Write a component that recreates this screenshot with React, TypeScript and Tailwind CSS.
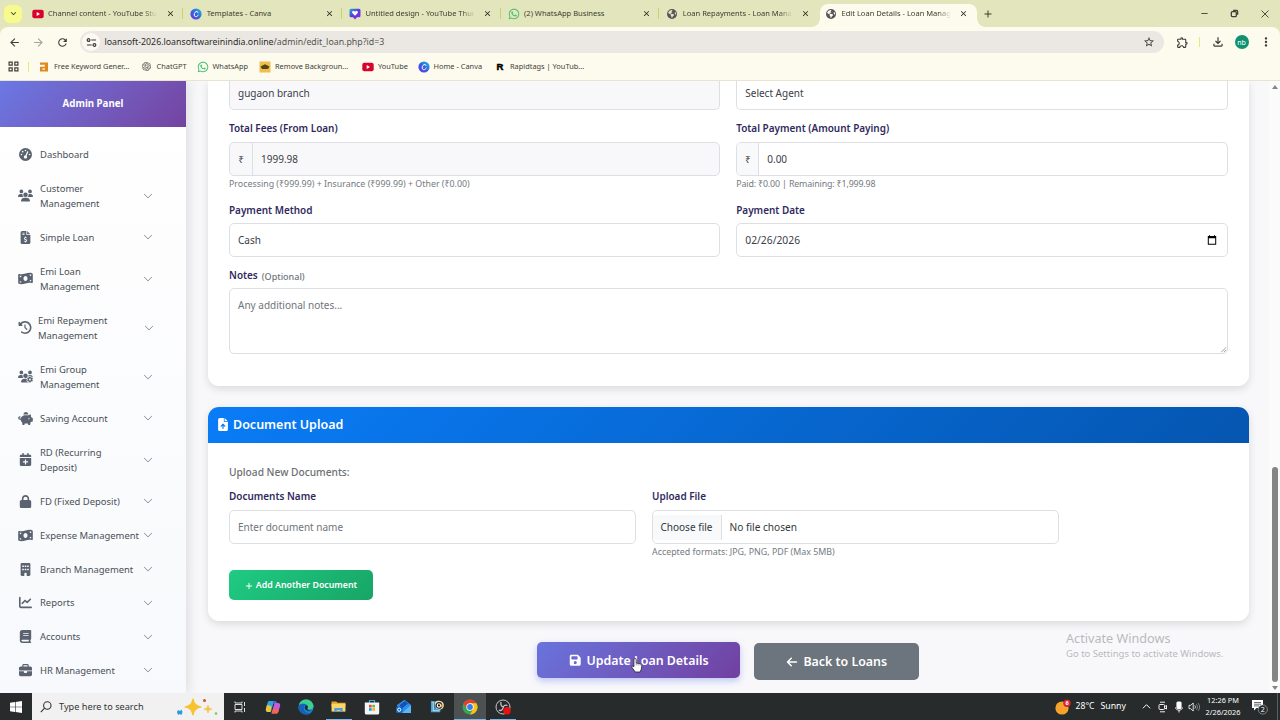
import type { ReactNode } from "react";
import type { IconType } from "react-icons";
import {
  FaArrowLeft, FaBook, FaBriefcase, FaBuilding, FaCalendarPlus, FaChartLine, FaClockRotateLeft,
  FaEarthAmericas, FaFileArrowUp, FaFileInvoiceDollar, FaFloppyDisk, FaGaugeHigh, FaLock,
  FaMoneyBillWave, FaPiggyBank, FaPlus, FaUsers, FaUsersGear,
} from "react-icons/fa6";
import { BsChevronDown } from "react-icons/bs";
import { FaWhatsapp } from "react-icons/fa";
import { SiOpenai } from "react-icons/si";
import {
  MdArrowBack, MdArrowForward, MdClose, MdMoreVert, MdOutlineExtension, MdOutlineFileDownload,
  MdRefresh, MdStarBorder, MdKeyboardArrowDown, MdAdd,
} from "react-icons/md";

/* ---------- small brand marks ---------- */

const YouTubeMark = () => (
  <svg viewBox="0 0 12 12" className="size-3">
    <rect x="0.3" y="1.8" width="11.4" height="8.4" rx="2" fill="#d9042b" />
    <path d="M4.7 4.1 8 6 4.7 7.9z" fill="#fff" />
  </svg>
);

const CanvaMark = () => (
  <svg viewBox="0 0 12 12" className="size-3">
    <defs>
      <linearGradient id="canva" x1="0" y1="1" x2="1" y2="0">
        <stop offset="0" stopColor="#6a2be8" />
        <stop offset="0.5" stopColor="#3566e0" />
        <stop offset="1" stopColor="#17c3cf" />
      </linearGradient>
    </defs>
    <circle cx="6" cy="6" r="5.6" fill="url(#canva)" />
    <path d="M8 4.4C7.8 3.2 6.2 3 5 4.4 3.7 6 4 8.6 5.700 8.700 6.8 8.7 7.7 8 8.2 7.1" fill="none" stroke="#fff" strokeWidth="1" strokeLinecap="round" />
  </svg>
);

const DesignMark = () => (
  <svg viewBox="0 0 12 12" className="size-3">
    <defs>
      <linearGradient id="design" x1="0" y1="0" x2="1" y2="1">
        <stop offset="0" stopColor="#12b5d8" />
        <stop offset="0.45" stopColor="#5a3be0" />
        <stop offset="1" stopColor="#8a2be2" />
      </linearGradient>
    </defs>
    <path d="M2 .7h8A1.5 1.5 0 0 1 11.5 2.2v5.6A1.5 1.5 0 0 1 10 9.3H8L6 11.5 4 9.3H2A1.5 1.5 0 0 1 .5 7.8V2.2A1.5 1.5 0 0 1 2 .7z" fill="url(#design)" />
    <path d="M6 7.800 3.500 5.300a1.400 1.400 0 0 1 2-2l.5.5.5-.5a1.400 1.400 0 0 1 2 2z" fill="#fff" />
  </svg>
);

const WhatsAppMark = () => <FaWhatsapp className="size-3 text-[#3cbf6b]" />;
const GlobeMark = () => <FaEarthAmericas className="size-[10px] text-[#55575a]" />;

const KeywordMark = () => (
  <svg viewBox="0 0 10 10" className="size-[10px]">
    <path d="M1 .5h8v9H1V4.800h4.800V2.800H1zM3.500 6.300v1.500h2.300V6.300z" fill="#e08a1e" fillRule="evenodd" />
  </svg>
);

const RemoveBgMark = () => (
  <svg viewBox="0 0 12 12" className="size-3">
    <rect x="0.5" y="0.5" width="11" height="11" fill="#f0be4a" />
    <path d="M1.500 5.500 6 3.200l4.500 2.300L9 8H3z" fill="#54441c" />
  </svg>
);

const RapidMark = () => (
  <span className="font-['Liberation_Sans',sans-serif] text-[9.5px] leading-none font-bold text-black [-webkit-text-stroke:0.5px_#000]">R</span>
);

/* ---------- browser chrome ---------- */

const tabs: { title: string; mark: () => ReactNode; fade?: boolean; active?: boolean }[] = [
  { title: "Channel content - YouTube Stu", mark: YouTubeMark, fade: true },
  { title: "Templates - Canva", mark: CanvaMark },
  { title: "Untitled design - YouTube Thur", mark: DesignMark, fade: true },
  { title: "(2) WhatsApp Business", mark: WhatsAppMark },
  { title: "Loan Repayments - Loan Mana", mark: GlobeMark, fade: true },
  { title: "Edit Loan Details - Loan Manag", mark: GlobeMark, fade: true, active: true },
];

function TabStrip() {
  return (
    <div className="flex h-[27px] items-stretch bg-[#e3e5bd] text-[#3c3d2c]">
      <div className="flex w-[24.5px] shrink-0 items-center pl-1">
        <span className="flex size-[18px] items-center justify-center rounded-md bg-[#f7fb8e]">
          <MdKeyboardArrowDown className="size-[11px]" />
        </span>
      </div>
      {tabs.map(({ title, mark: Mark, fade, active }, i) => (
        <div key={title} className={`flex w-[158.7px] shrink-0 pt-1 ${active ? "pl-[2px]" : ""}`}>
          <div
            className={
              active
                ? "relative flex w-full items-center rounded-t-lg bg-[#fdfaee] pb-1 pl-[5px] before:absolute before:bottom-0 before:-left-2 before:size-2 before:bg-[radial-gradient(circle_at_0_0,transparent_7.5px,#fdfaee_8px)] after:absolute after:-right-2 after:bottom-0 after:size-2 after:bg-[radial-gradient(circle_at_100%_0,transparent_7.5px,#fdfaee_8px)]"
                : "flex w-full items-center pb-1 pl-[7px]"
            }
          >
            <span className="flex w-3 shrink-0 justify-center"><Mark /></span>
            <span className="ml-[4.5px] flex w-[113px] shrink-0">
              <span className={`text-[7.55px] whitespace-nowrap ${fade ? "[mask-image:linear-gradient(to_right,#000_88%,transparent)]" : ""}`}>
                {title}
              </span>
            </span>
            <MdClose className="ml-[5px] size-[9px] shrink-0 text-[#26271c]" />
            {!active && i < 4 && <span className="ml-auto h-[11px] w-px bg-[#c9d36b]" />}
          </div>
        </div>
      ))}
      <MdAdd className="ml-[5px] size-3 shrink-0 self-center" />
      <div className="ml-auto flex items-center gap-[21px] pr-[10px] text-[#3c3d3a]">
        <svg viewBox="0 0 10 10" className="size-[9px]" fill="none" stroke="currentColor"><path d="M1.5 5h7" /></svg>
        <svg viewBox="0 0 10 10" className="size-[9px]" fill="none" stroke="currentColor" strokeWidth="1.4">
          <rect x="1.5" y="3" width="5.5" height="5.5" rx="1" />
          <path d="M3.5 1.5h4a1 1 0 0 1 1 1v4" />
        </svg>
        <svg viewBox="0 0 10 10" className="size-[10px]" fill="none" stroke="currentColor" strokeWidth="0.9"><path d="m1.5 1.500 7 7M8.500 1.500l-7 7" /></svg>
      </div>
    </div>
  );
}

function Toolbar() {
  return (
    <div className="flex h-[30px] items-center rounded-t-lg bg-[#fdfaee] text-[#3b3b38]">
      <MdArrowBack className="ml-2 size-[13px]" />
      <MdArrowForward className="ml-[11px] size-[13px] text-[#a3a29b]" />
      <MdRefresh className="ml-[11px] size-[13px]" />
      <div className="ml-[11px] flex h-[22px] w-[1083.5px] items-center rounded-full bg-[#ebe8e3] pr-[9px] pl-[2px]">
        <span className="flex size-[18px] items-center justify-center rounded-full bg-[#fbf9f2]">
          <svg viewBox="0 0 12 12" className="size-[11px]" fill="none" stroke="currentColor" strokeWidth="1.3">
            <circle cx="2.8" cy="3.3" r="1.5" />
            <path d="M5.800 3.300h5.200M1 8.700h5.200" />
            <circle cx="9.2" cy="8.7" r="1.5" />
          </svg>
        </span>
        <span className="ml-[4.5px] text-[8.8px] leading-none whitespace-nowrap text-[#2c2c2a]">
          loansoft-2026.loansoftwareinindia.online<span className="text-[#55554f]">/admin/edit_loan.php?id=3</span>
        </span>
        <MdStarBorder className="ml-auto size-3" />
      </div>
      <MdOutlineExtension className="ml-[12px] size-[13px]" />
      <span className="ml-[10px] h-[10px] w-px bg-[#e3ea7a]" />
      <MdOutlineFileDownload className="ml-[11px] size-[14px]" />
      <span className="ml-[10px] flex size-[14px] items-center justify-center rounded-full bg-[#0f9172] text-[7px] leading-none text-white">nb</span>
      <MdMoreVert className="ml-[10px] size-[14px]" />
    </div>
  );
}

const bookmarks: { label: string; mark: () => ReactNode; width: string }[] = [
  { label: "Free Keyword Gener...", mark: KeywordMark, width: "w-[102.5px]" },
  { label: "ChatGPT", mark: () => <SiOpenai className="size-[9px] text-[#4b4b48]" />, width: "w-[56px]" },
  { label: "WhatsApp", mark: WhatsAppMark, width: "w-[62.5px]" },
  { label: "Remove Backgroun...", mark: RemoveBgMark, width: "w-[103px]" },
  { label: "YouTube", mark: YouTubeMark, width: "w-[55.5px]" },
  { label: "Home - Canva", mark: CanvaMark, width: "w-[76.5px]" },
  { label: "Rapidtags | YouTub...", mark: RapidMark, width: "w-[100px]" },
];

function BookmarksBar() {
  return (
    <div className="flex h-[24px] items-center border-b border-[#e9e3cf] bg-[#fdfaee] pb-1 text-[#3f3f3a]">
      <svg viewBox="0 0 10 10" className="ml-2 size-[11px]" fill="none" stroke="currentColor" strokeWidth="1.1">
        <path d="M1 1h2.800v2.800H1zM6.200 1H9v2.800H6.200zM1 6.200h2.800V9H1zM6.200 6.200H9V9H6.200z" />
      </svg>
      <span className="mr-[9px] ml-[9px] h-[10px] w-px bg-[#e3ea7a]" />
      {bookmarks.map(({ label, mark: Mark, width }) => (
        <div key={label} className={`flex shrink-0 items-center gap-[4px] ${width}`}>
          <span className="flex w-3 justify-center"><Mark /></span>
          <span className="text-[7.4px] leading-none whitespace-nowrap">{label}</span>
        </div>
      ))}
    </div>
  );
}

/* ---------- admin sidebar ---------- */

const navItems: { lines: string[]; icon: IconType; narrow?: boolean }[] = [
  { lines: ["Customer", "Management"], icon: FaUsers },
  { lines: ["Simple Loan"], icon: FaFileInvoiceDollar },
  { lines: ["Emi Loan", "Management"], icon: FaMoneyBillWave },
  { lines: ["Emi Repayment", "Management"], icon: FaClockRotateLeft, narrow: true },
  { lines: ["Emi Group", "Management"], icon: FaUsersGear },
  { lines: ["Saving Account"], icon: FaPiggyBank },
  { lines: ["RD (Recurring", "Deposit)"], icon: FaCalendarPlus },
  { lines: ["FD (Fixed Deposit)"], icon: FaLock },
  { lines: ["Expense Management"], icon: FaMoneyBillWave },
  { lines: ["Branch Management"], icon: FaBuilding },
  { lines: ["Reports"], icon: FaChartLine },
  { lines: ["Accounts"], icon: FaBook },
  { lines: ["HR Management"], icon: FaBriefcase },
];

function Sidebar() {
  return (
    <aside className="z-10 flex w-[186px] shrink-0 flex-col overflow-hidden bg-linear-to-b from-white to-[#f8f9fc] shadow-[2px_0_12px_rgba(0,0,0,0.12)]">
      <div className="flex h-[46px] shrink-0 items-center justify-center bg-linear-135 from-[#6a78e4] to-[#7443a0] pt-px text-[9.7px] font-bold text-white">
        Admin Panel
      </div>
      <nav className="mt-[10px] text-[9.45px] leading-[15px] text-[#495057]">
        <div className="flex h-[34px] items-center pl-[19px]">
          <FaGaugeHigh className="size-[13px] text-[#5b6370]" />
          <span className="ml-2">Dashboard</span>
        </div>
        {navItems.map(({ lines, icon: Icon, narrow }) => (
          <div key={lines.join(" ")} className={`flex shrink-0 items-center pl-[18px] ${lines.length > 1 ? "h-[49.2px]" : "h-[33.8px]"}`}>
            <Icon className={`h-[13px] shrink-0 text-[#5b6370] ${narrow ? "w-[14px]" : "w-[15px]"}`} />
            <span className={`shrink-0 whitespace-nowrap ${narrow ? "ml-[6px] w-[104px]" : "ml-[7px] w-[102px]"}`}>
              {lines.map((line) => <span key={line} className="block">{line}</span>)}
            </span>
            <BsChevronDown className={`size-[10px] shrink-0 text-[#5b6370] ${narrow ? "ml-[2px]" : "ml-[1px]"}`} />
          </div>
        ))}
      </nav>
    </aside>
  );
}

/* ---------- form pieces ---------- */

const Label = ({ children }: { children: ReactNode }) => (
  <div className="flex h-[13px] items-center gap-[4px] pt-px text-[9.95px] leading-none font-semibold text-[#2f2a5e]">{children}</div>
);

const Help = ({ children }: { children: ReactNode }) => (
  <div className="mt-[2px] flex h-[12px] items-center text-[8.85px] leading-none text-[#747a80]">{children}</div>
);

const boxBase = "flex h-[34px] items-center rounded-[5px] border border-[#dddfe3] text-[10px] leading-none";

function Section({ children, className }: { children: ReactNode; className: string }) {
  return <section className={`shrink-0 bg-white shadow-[0_3px_8px_rgba(0,0,0,0.12)] ${className}`}>{children}</section>;
}

function PaymentCard() {
  return (
    <Section className="h-[305px] rounded-b-[11px] px-[21px]">
      <div className="grid grid-cols-2 gap-x-4 text-[#3b4046]">
        <div className="flex h-[29px] items-center rounded-b-[5px] border border-t-0 border-[#dddfe3] bg-[#f8f8fb] px-2 pb-[4px] text-[10px] leading-none">gugaon branch</div>
        <div className="flex h-[29px] items-center rounded-b-[5px] border border-t-0 border-[#dddfe3] px-2 pb-[4px] text-[10px] leading-none">Select Agent</div>

        <div className="mt-[12px]">
          <Label>Total Fees (From Loan)</Label>
          <div className={`mt-[7px] overflow-hidden bg-[#f8f8fb] ${boxBase}`}>
            <span className="flex h-full w-[23px] items-center justify-center border-r border-[#dddfe3]">₹</span>
            <span className="pl-2">1999.98</span>
          </div>
          <Help>Processing (₹999.99) + Insurance (₹999.99) + Other (₹0.00)</Help>
        </div>
        <div className="mt-[12px]">
          <Label>Total Payment (Amount Paying)</Label>
          <div className={`mt-[7px] overflow-hidden ${boxBase}`}>
            <span className="flex h-full w-[22px] items-center justify-center border-r border-[#dddfe3] bg-[#f8f9fa]">₹</span>
            <span className="pl-2">0.00</span>
          </div>
          <Help><span className="tracking-[-0.15px]">Paid: ₹0.00 | Remaining: ₹1,999.98</span></Help>
        </div>

        <div className="mt-[14px]">
          <Label>Payment Method</Label>
          <div className={`mt-[6px] px-2 ${boxBase}`}>Cash</div>
        </div>
        <div className="mt-[14px]">
          <Label>Payment Date</Label>
          <div className={`mt-[6px] justify-between pr-[10px] pl-2 ${boxBase}`}>
            <span className="text-[10.3px]">02/26/2026</span>
            <svg viewBox="0 0 10 10" className="size-[10px]"><path d="M1 1h1V.2h1V1h4V.2h1V1h1.200v8.800H.8V1zM1.800 3.300v5.500h6.400V3.300z" fill="#000" fillRule="evenodd" /></svg>
          </div>
        </div>
      </div>

      <div className="mt-[12px]">
        <Label>
          Notes <span className="text-[9px] font-medium text-[#6c757d]">(Optional)</span>
        </Label>
        <div className="mt-[6px] flex h-[66px] justify-between rounded-[5px] border border-[#dddfe3] pt-[11px] pl-2 text-[10px] leading-none text-[#6f757b]">
          Any additional notes...
          <svg viewBox="0 0 8 8" className="size-[7px] self-end" stroke="#777" strokeWidth="0.8"><path d="M1.500 7 7 1.500M4.500 7 7 4.500" /></svg>
        </div>
      </div>
    </Section>
  );
}

function DocumentCard() {
  return (
    <Section className="mt-[21px] h-[214px] overflow-hidden rounded-[11px]">
      <div className="flex h-[36px] items-center bg-linear-135 from-[#0a7cf7] to-[#0556b0] pt-px pl-[9px] text-[12.5px] font-semibold text-white">
        <FaFileArrowUp className="mr-1 mb-0.5 h-[13px] w-[12px]" />
        Document Upload
      </div>
      <div className="px-[21px] pt-[22px]">
        <div className="flex h-[13px] items-center pt-px text-[10.2px] leading-none font-medium text-[#6c6f73]">Upload New Documents:</div>
        <div className="mt-[12px] flex gap-4">
          <div className="w-[407px]">
            <Label>Documents Name</Label>
            <div className={`mt-[7px] px-2 text-[#6f757b] ${boxBase}`}>Enter document name</div>
          </div>
          <div className="w-[407px]">
            <Label>Upload File</Label>
            <div className={`mt-[7px] text-[#33383d] ${boxBase}`}>
              <span className="flex h-[25px] w-[68.5px] items-center border-r border-[#dddfe3] bg-[#f8f9fa] pl-[7.5px]">Choose file</span>
              <span className="pl-2 text-[10.15px]">No file chosen</span>
            </div>
            <Help>Accepted formats: JPG, PNG, PDF (Max 5MB)</Help>
          </div>
        </div>
        <button className="mt-[12px] flex h-[30px] w-[144px] items-center justify-center gap-[3px] rounded-[5px] bg-linear-135 from-[#1fcb83] to-[#18a566] pt-px text-[8.8px] font-semibold text-white">
          <FaPlus className="size-2" />
          Add Another Document
        </button>
      </div>
    </Section>
  );
}

function MainPane() {
  return (
    <main className="relative flex min-w-0 flex-1 flex-col bg-[#f8f8fb] pr-[20.5px] pl-[22px]">
      <PaymentCard />
      <DocumentCard />
      <div className="mt-[21px] flex items-start justify-center gap-[14px] text-[12.4px] font-semibold text-white">
        <button className="flex h-[36px] w-[203px] items-center justify-center gap-[5px] rounded-[5px] bg-linear-135 from-[#6874dd] to-[#7040a0] pt-[2px] shadow-[0_3px_7px_rgba(102,126,234,0.4)]">
          <FaFloppyDisk className="mb-0.5 size-[12.5px]" />
          Update Loan Details
        </button>
        <button className="mt-px flex h-[37px] w-[165px] items-center justify-center gap-[5px] rounded-[5px] bg-[#6c757d] pt-[2px]">
          <FaArrowLeft className="mb-px size-[12px]" />
          Back to Loans
        </button>
      </div>

      <svg viewBox="0 0 12 16" className="absolute top-[576px] left-[445px] h-[16px] w-3">
        <path d="M4 1.500c.8 0 1.200.5 1.200 1.200V6l4.300.8c.9.200 1.500.8 1.400 1.800l-.6 3.600-1.200 2.800H4.300L1 10.500c-.5-.8 0-1.600 1.100-1.300l.8.600V2.700c0-.7.400-1.200 1.100-1.200z" fill="#fff" stroke="#222" strokeWidth="0.8" strokeLinejoin="round" />
        <path d="M5.200 6v2.500M7.200 6.500v2M9.200 7v1.800" stroke="#444" strokeWidth="0.5" />
      </svg>
      <div className="absolute top-[548px] left-[880px] leading-none whitespace-nowrap text-[#b9babc]">
        <div className="text-[12.65px] leading-[18px]">Activate Windows</div>
        <div className="pt-px text-[9.5px] leading-[12px]">Go to Settings to activate Windows.</div>
      </div>
    </main>
  );
}

function Scrollbar() {
  return (
    <div className="flex w-[11px] shrink-0 flex-col items-center bg-[#fbfbfb]">
      <svg viewBox="0 0 6 4" className="mt-1 ml-px h-1 w-1.5"><path d="M3 0 6 4H0z" fill="#858585" /></svg>
      <div className="mt-[378px] ml-px h-[215px] w-[6px] rounded-full bg-[#858585]" />
      <svg viewBox="0 0 6 4" className="mt-1 ml-px h-1 w-1.5"><path d="M3 4 6 0H0z" fill="#858585" /></svg>
    </div>
  );
}

/* ---------- Windows taskbar ---------- */

const Slot = ({ children, state }: { children: ReactNode; state?: "open" | "active" }) => (
  <span className={`flex h-full w-[32.8px] shrink-0 flex-col items-center justify-end ${state === "active" ? "bg-[#4e5152]" : ""}`}>
    <span className="flex flex-1 items-center pt-px">{children}</span>
    <span className={`h-px ${state ? "bg-[#76b9ed]" : ""} ${state === "active" ? "w-full" : "w-[26px]"}`} />
  </span>
);

function Taskbar() {
  return (
    <footer className="flex h-[27px] items-center bg-[#272b2c] text-white">
      <span className="flex w-8 justify-center">
        <svg viewBox="0 0 12 12" className="size-3" fill="#fff"><path d="M0 1.700 5 1v4.700H0zM5.600.9 12 0v5.700H5.600zM0 6.300h5V11l-5-.7zM5.600 6.300H12V12l-6.400-.9z" /></svg>
      </span>
      <div className="flex h-full w-[192px] items-center bg-[#f1f1f1] pl-2 text-[#333]">
        <svg viewBox="0 0 12 12" className="size-3" fill="none" stroke="#333" strokeWidth="1.1"><circle cx="7.3" cy="4.5" r="3.7" /><path d="M4.600 7.200.8 11.200" /></svg>
        <span className="ml-[7px] pt-px text-[9.2px]">Type here to search</span>
        <svg viewBox="0 0 42 18" className="mr-[6px] ml-auto h-[18px] w-[42px]">
          <path d="M17 1c1.200 5.300 2.500 6.600 8 8-5.500 1.400-6.800 2.700-8 8-1.200-5.300-2.500-6.600-8-8 5.500-1.400 6.800-2.700 8-8z" fill="#f7c22e" stroke="#f7c22e" strokeWidth="1.2" strokeLinejoin="round" />
          <path d="M32 7c.6 2.700 1.200 3.300 4 4-2.800.7-3.400 1.300-4 4-.6-2.700-1.200-3.300-4-4 2.800-.7 3.400-1.300 4-4z" fill="#f5c445" stroke="#f5c445" strokeWidth="0.7" />
          <path d="m2 12 2 1 1.500-1.500 1 2.500-1 3-2-1L2 17l-1-3z" fill="#2b9bd8" />
          <circle cx="28.5" cy="2.500" r="1.500" fill="#cf4e2c" />
          <circle cx="40" cy="15.500" r="1.300" fill="#8bc34a" />
        </svg>
      </div>
      <Slot>
        <svg viewBox="0 0 12 12" className="size-3" fill="none" stroke="#ddd" strokeWidth="1"><path d="M1 3.500h7v5H1zM1 .5v1.500h7V.5M1 11.500V10h7v1.500M10.500 1v4M10.500 7v4" /></svg>
      </Slot>
      <Slot>
        <svg viewBox="0 0 16 16" className="size-4">
          <path d="M4 2h5l-3 11H3C1 13 .3 11.500 1 9.500L2.500 4C2.800 2.700 3.200 2 4 2z" fill="#2aa8e0" />
          <path d="M1 9.500 2 6l4.500 1L5.500 13H3C1.300 13 .5 11.500 1 9.500z" fill="#f2c230" />
          <path d="M9 2h2.200l1 3H8.500z" fill="#3b66d8" />
          <path d="M9.500 4H13c2 0 2.500 1.500 2 3.500l-1.600 5C13 14 12.300 14.500 11.500 14.500H6.500z" fill="#c55be0" />
          <path d="m8.200 9.500 5.900 1-.7 2C13 14 12.300 14.500 11.500 14.500H6.500z" fill="#f2684d" />
        </svg>
      </Slot>
      <Slot>
        <svg viewBox="0 0 16 16" className="size-4">
          <circle cx="8" cy="8" r="7.6" fill="#1b82d6" />
          <path d="M1 5.500C3-1 13-1.500 15.400 6c.6 3-1.500 4.500-4 4.500-2 0-1.800-1-1.500-2C10.500 5.500 5.500 3 1 5.500z" fill="#3dcf8e" />
          <path d="M.5 8.500C1 5 6 4 8.500 6.200 5.500 6.500 5 10 7 12.500c1.500 1.800 4.500 2 6.500 1-3 3.200-8 2.600-10.500 0C1.300 12 .5 10.200.5 8.500z" fill="#1660b5" />
          <path d="M8.500 6.300c-2.500 1-2 4 .3 5.200 1.800 1 4 .8 5.700 0-1 .4-4.800.5-5.200-1.500-.2-1 .8-1.500.6-2.300-.2-.7-.7-1.200-1.400-1.400z" fill="#272b2c" />
        </svg>
      </Slot>
      <Slot state="open">
        <svg viewBox="0 0 16 14" className="h-[13px] w-[15px]">
          <path d="M.5 1.500h5L7 3h8.500v4H.5z" fill="#e0a52c" />
          <path d="M.5 4h15v8.500H.5z" fill="#fbd667" />
          <path d="M3.500 13V8.500h9V13h-2.500v-2H6v2z" fill="#4a9fe0" />
        </svg>
      </Slot>
      <Slot>
        <svg viewBox="0 0 16 16" className="size-4">
          <path d="M5.500 4V1.500h5V4" fill="none" stroke="#3ba6e6" strokeWidth="1.2" />
          <path d="M.8 3.500h14.400V14a1.500 1.500 0 0 1-1.500 1.500H2.300A1.500 1.500 0 0 1 .8 14z" fill="#f5f5f5" />
          <path d="M5 5.800h2.700v2.700H5z" fill="#e74c2c" />
          <path d="M8.300 5.800H11v2.700H8.300z" fill="#7bb928" />
          <path d="M5 9.100h2.700v2.700H5z" fill="#1ba1e2" />
          <path d="M8.300 9.100H11v2.700H8.300z" fill="#f3b71b" />
        </svg>
      </Slot>
      <Slot>
        <svg viewBox="0 0 16 16" className="size-4">
          <path d="M1 6 8.500.8 15 6v8H2.500z" fill="#2f8fe8" />
          <path d="M3.500 6 9 2l3 2.500L5.500 10z" fill="#1452b8" />
          <path d="m15 6-9 8h9z" fill="#56b8f5" />
          <rect x="0" y="7.5" width="6.5" height="6.5" rx="1.5" fill="#1267c4" />
          <circle cx="3.2" cy="10.7" r="1.6" fill="none" stroke="#fff" strokeWidth="1" />
        </svg>
      </Slot>
      <Slot>
        <svg viewBox="0 0 16 16" className="size-[15px]">
          <path d="M1 2h4v8h6v4H1z" fill="#4aa3d8" />
          <path d="M2.500 3.500h1v9H10" fill="none" stroke="#d9eef8" strokeWidth="0.8" />
          <path d="M5 3.500C8 1 13 1.500 14.500 5c1 3-1 6-4 6.500L6 10z" fill="#f0dfb2" />
          <circle cx="9.5" cy="6.8" r="3" fill="#fff" stroke="#222" strokeWidth="1.2" />
          <circle cx="9.5" cy="6.8" r="1.2" fill="#111" />
          <path d="m11.500 5.500 3.500 1.700-3.500 1.500z" fill="#e8a02a" />
        </svg>
      </Slot>
      <Slot state="active">
        <svg viewBox="0 0 16 16" className="size-4">
          <circle cx="8" cy="8" r="7.5" fill="#35a853" />
          <path d="M1.500 4.250A7.500 7.500 0 0 1 14.500 4.250H8L4.800 9.900z" fill="#e2402f" />
          <path d="M14.500 4.250A7.500 7.500 0 0 1 8 15.500L11.200 9.900 8 4.250z" fill="#fbc116" />
          <circle cx="8" cy="8" r="3.7" fill="#fff" />
          <circle cx="8" cy="8" r="2.9" fill="#3b7ded" />
        </svg>
      </Slot>
      <Slot state="open">
        <svg viewBox="0 0 16 16" className="size-4">
          <circle cx="8" cy="8" r="7" fill="#26282b" stroke="#c9c9c9" strokeWidth="1" />
          <path d="M6 3c-.5 2.500.5 4.500 2.300 5M12.500 6.500C10.500 5.500 9 6.300 8.300 8M4 11c2 1.300 4-.3 4.300-3" fill="none" stroke="#c9c9c9" strokeWidth="1.3" />
          <circle cx="12" cy="11.8" r="3.7" fill="#ea0e0e" />
        </svg>
      </Slot>

      <div className="ml-auto flex h-full items-center">
        <svg viewBox="0 0 16 16" className="size-4">
          <circle cx="7" cy="9" r="6.6" fill="#f7a32b" />
          <path d="M1 6.500A6.600 6.600 0 0 0 13 12 6.600 6.600 0 0 1 1 6.500z" fill="#f3842c" />
          <circle cx="12" cy="4.2" r="3.7" fill="#d3262f" />
          <text x="12" y="6.2" textAnchor="middle" className="fill-white text-[5.5px] font-bold">6</text>
        </svg>
        <span className="ml-[5px] text-[8.6px]">28°C</span>
        <span className="ml-[6px] text-[8.75px]">Sunny</span>
        <svg viewBox="0 0 10 10" className="ml-[16px] size-[9px]" fill="none" stroke="#fff" strokeWidth="1.1"><path d="m1 7 4-4 4 4" /></svg>
        <svg viewBox="0 0 12 12" className="ml-[6px] size-[12px]" fill="none" stroke="#f0f0f0" strokeWidth="1"><rect x="2" y="3.5" width="5.5" height="5" rx="1" /><path d="m7.500 5.500 2-1v3.500l-2-1M3 1.200h5M3 10.800h5" /></svg>
        <svg viewBox="0 0 12 12" className="ml-[4px] size-[12px]"><rect x="3.4" y="0.500" width="5.200" height="7.500" rx="1.500" fill="#fff" /><path d="M2.500 6.500c0 3.500 7 3.500 7 0M6 9v2.500" fill="none" stroke="#fff" strokeWidth="0.9" /></svg>
        <svg viewBox="0 0 12 12" className="ml-[3px] size-3" fill="none" stroke="#eee" strokeWidth="0.9"><path d="M1 4.300h1.700L5.200 2v8L2.700 7.700H1zM6.800 4.500c.8.900.8 2.100 0 3" /><path d="M8.300 3.200c1.500 1.500 1.500 4 0 5.600M9.900 2c2.200 2.200 2.200 5.800 0 8" stroke="#8a8d8e" /></svg>
        <span className="ml-[5px] w-[36px] text-center text-[7.37px] leading-[11.5px]">
          12:26 PM
          <br />
          2/26/2026
        </span>
        <svg viewBox="0 0 18 16" className="ml-[10px] h-[16px] w-[18px]">
          <path d="M1 1h11v8H5.500L3 11.500V9H1z" fill="#fff" />
          <path d="M3 3.500h7M3 5.200h7M3 6.900h5" stroke="#333" strokeWidth="0.7" />
          <circle cx="11.8" cy="10.5" r="4.6" fill="#272b2c" stroke="#aaa" strokeWidth="0.7" />
          <text x="11.8" y="13" textAnchor="middle" className="fill-white text-[7px]">2</text>
        </svg>
        <span className="ml-[8px] h-full w-px bg-[#5b5e60]" />
        <span className="w-[2px]" />
      </div>
    </footer>
  );
}

export default function App() {
  return (
    <div className="flex h-[720px] w-[1280px] flex-col overflow-hidden bg-[#e3e5bd] font-['Noto_Sans','Open_Sans',sans-serif]">
      <TabStrip />
      <Toolbar />
      <BookmarksBar />
      <div className="flex h-[612px] overflow-hidden">
        <Sidebar />
        <MainPane />
        <Scrollbar />
      </div>
      <Taskbar />
    </div>
  );
}
